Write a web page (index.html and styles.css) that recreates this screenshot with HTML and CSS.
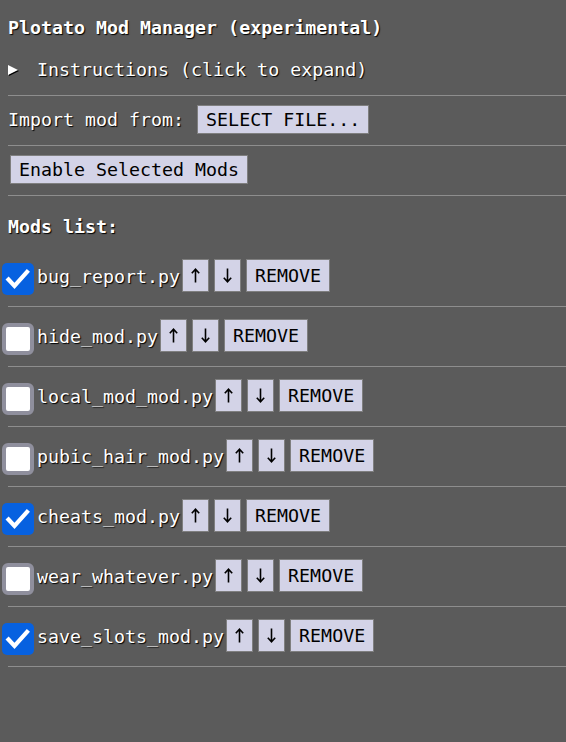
FILE: index.html
```html
<!DOCTYPE html>
<html lang="en">
<head>
<meta charset="utf-8">
<title>Plotato Mod Manager</title>
<link rel="stylesheet" href="styles.css">
</head>
<body>
<div class="section intro">
  <div class="title">Plotato Mod Manager (experimental)</div>
  <details class="instructions">
    <summary><span class="marker"></span>Instructions (click to expand)</summary>
  </details>
</div>
<div class="section bar">
  <span class="label">Import mod from:</span>
  <button class="btn">SELECT FILE...</button>
</div>
<div class="section bar">
  <button class="btn enable">Enable Selected Mods</button>
</div>
<div class="mods-head">Mods list:</div>
<div class="mods">
  <div class="row">
    <span class="check on"><svg viewBox="0 0 32 32" width="32" height="32"><path d="M6.5 16.5 L12.5 23 L25 9" fill="none" stroke="#fff" stroke-width="4.2" stroke-linecap="square" stroke-linejoin="miter"/></svg></span>
    <span class="name">bug_report.py</span>
    <button class="btn small arrow-btn" aria-label="up"><svg class="arrow" viewBox="0 0 11 15" width="11" height="15"><path d="M5.5 14.5 V1.2 M1.8 5.2 L5.5 1.2 L9.2 5.2" fill="none" stroke="#000" stroke-width="1.6"/></svg></button><button class="btn small arrow-btn" aria-label="down"><svg class="arrow" viewBox="0 0 11 15" width="11" height="15"><path d="M5.5 0.5 V13.8 M1.8 9.8 L5.5 13.8 L9.2 9.8" fill="none" stroke="#000" stroke-width="1.6"/></svg></button><button class="btn small">REMOVE</button>
  </div>
  <div class="row">
    <span class="check off"></span>
    <span class="name">hide_mod.py</span>
    <button class="btn small arrow-btn" aria-label="up"><svg class="arrow" viewBox="0 0 11 15" width="11" height="15"><path d="M5.5 14.5 V1.2 M1.8 5.2 L5.5 1.2 L9.2 5.2" fill="none" stroke="#000" stroke-width="1.6"/></svg></button><button class="btn small arrow-btn" aria-label="down"><svg class="arrow" viewBox="0 0 11 15" width="11" height="15"><path d="M5.5 0.5 V13.8 M1.8 9.8 L5.5 13.8 L9.2 9.8" fill="none" stroke="#000" stroke-width="1.6"/></svg></button><button class="btn small">REMOVE</button>
  </div>
  <div class="row">
    <span class="check off"></span>
    <span class="name">local_mod_mod.py</span>
    <button class="btn small arrow-btn" aria-label="up"><svg class="arrow" viewBox="0 0 11 15" width="11" height="15"><path d="M5.5 14.5 V1.2 M1.8 5.2 L5.5 1.2 L9.2 5.2" fill="none" stroke="#000" stroke-width="1.6"/></svg></button><button class="btn small arrow-btn" aria-label="down"><svg class="arrow" viewBox="0 0 11 15" width="11" height="15"><path d="M5.5 0.5 V13.8 M1.8 9.8 L5.5 13.8 L9.2 9.8" fill="none" stroke="#000" stroke-width="1.6"/></svg></button><button class="btn small">REMOVE</button>
  </div>
  <div class="row">
    <span class="check off"></span>
    <span class="name">pubic_hair_mod.py</span>
    <button class="btn small arrow-btn" aria-label="up"><svg class="arrow" viewBox="0 0 11 15" width="11" height="15"><path d="M5.5 14.5 V1.2 M1.8 5.2 L5.5 1.2 L9.2 5.2" fill="none" stroke="#000" stroke-width="1.6"/></svg></button><button class="btn small arrow-btn" aria-label="down"><svg class="arrow" viewBox="0 0 11 15" width="11" height="15"><path d="M5.5 0.5 V13.8 M1.8 9.8 L5.5 13.8 L9.2 9.8" fill="none" stroke="#000" stroke-width="1.6"/></svg></button><button class="btn small">REMOVE</button>
  </div>
  <div class="row">
    <span class="check on"><svg viewBox="0 0 32 32" width="32" height="32"><path d="M6.5 16.5 L12.5 23 L25 9" fill="none" stroke="#fff" stroke-width="4.2" stroke-linecap="square" stroke-linejoin="miter"/></svg></span>
    <span class="name">cheats_mod.py</span>
    <button class="btn small arrow-btn" aria-label="up"><svg class="arrow" viewBox="0 0 11 15" width="11" height="15"><path d="M5.5 14.5 V1.2 M1.8 5.2 L5.5 1.2 L9.2 5.2" fill="none" stroke="#000" stroke-width="1.6"/></svg></button><button class="btn small arrow-btn" aria-label="down"><svg class="arrow" viewBox="0 0 11 15" width="11" height="15"><path d="M5.5 0.5 V13.8 M1.8 9.8 L5.5 13.8 L9.2 9.8" fill="none" stroke="#000" stroke-width="1.6"/></svg></button><button class="btn small">REMOVE</button>
  </div>
  <div class="row">
    <span class="check off"></span>
    <span class="name">wear_whatever.py</span>
    <button class="btn small arrow-btn" aria-label="up"><svg class="arrow" viewBox="0 0 11 15" width="11" height="15"><path d="M5.5 14.5 V1.2 M1.8 5.2 L5.5 1.2 L9.2 5.2" fill="none" stroke="#000" stroke-width="1.6"/></svg></button><button class="btn small arrow-btn" aria-label="down"><svg class="arrow" viewBox="0 0 11 15" width="11" height="15"><path d="M5.5 0.5 V13.8 M1.8 9.8 L5.5 13.8 L9.2 9.8" fill="none" stroke="#000" stroke-width="1.6"/></svg></button><button class="btn small">REMOVE</button>
  </div>
  <div class="row">
    <span class="check on"><svg viewBox="0 0 32 32" width="32" height="32"><path d="M6.5 16.5 L12.5 23 L25 9" fill="none" stroke="#fff" stroke-width="4.2" stroke-linecap="square" stroke-linejoin="miter"/></svg></span>
    <span class="name">save_slots_mod.py</span>
    <button class="btn small arrow-btn" aria-label="up"><svg class="arrow" viewBox="0 0 11 15" width="11" height="15"><path d="M5.5 14.5 V1.2 M1.8 5.2 L5.5 1.2 L9.2 5.2" fill="none" stroke="#000" stroke-width="1.6"/></svg></button><button class="btn small arrow-btn" aria-label="down"><svg class="arrow" viewBox="0 0 11 15" width="11" height="15"><path d="M5.5 0.5 V13.8 M1.8 9.8 L5.5 13.8 L9.2 9.8" fill="none" stroke="#000" stroke-width="1.6"/></svg></button><button class="btn small">REMOVE</button>
  </div>
</div>
</body>
</html>
```
FILE: styles.css
```css
html {
  background: #5b5b5b;
}
body {
  margin: 8px 0 0 2px;
  background: #5b5b5b;
  color: #ffffff;
  font-family: "DejaVu Sans Mono", "Liberation Mono", monospace;
  font-size: 18.3px;
  line-height: 22px;
  text-shadow: 1px 1px 1px #000;
}
.section {
  margin-left: 6px;
  border-bottom: 1px solid #8e8e8e;
}
.intro {
  padding: 9px 0 14px;
}
.title {
  font-weight: bold;
  height: 22px;
}
.instructions {
  margin-top: 20px;
}
.instructions summary {
  list-style: none;
  display: flex;
  align-items: center;
  height: 22px;
  cursor: pointer;
}
.instructions summary::-webkit-details-marker {
  display: none;
}
.marker {
  width: 0;
  height: 0;
  border-left: 10px solid #fff;
  border-top: 5px solid transparent;
  border-bottom: 5px solid transparent;
  margin-right: 19px;
  filter: drop-shadow(1px 1px 0.5px #000);
}
.bar {
  display: flex;
  align-items: center;
  padding: 9px 0 11px;
}
.label {
  margin-right: 13px;
}
.btn {
  font-family: "DejaVu Sans Mono", "Liberation Mono", monospace;
  font-size: 18.3px;
  line-height: 22px;
  color: #000;
  text-shadow: none;
  background: #d3d3e7;
  border: 1px solid #7f7f7f;
  border-radius: 0;
  height: 29px;
  padding: 0 8px;
  margin: 0;
}
.enable {
  margin-left: 2px;
}
.mods-head {
  margin-left: 6px;
  font-weight: bold;
  padding: 20px 0 9px;
  height: 22px;
}
.row {
  display: flex;
  align-items: center;
  height: 60px;
  background: linear-gradient(#8e8e8e, #8e8e8e) no-repeat 6px 100% / calc(100% - 6px) 1px;
}
.check {
  box-sizing: border-box;
  width: 32px;
  height: 32px;
  margin: 4px 3px 1px 0;
  flex: none;
  display: block;
}
.check svg {
  display: block;
}
.check.on {
  background: #0761e0;
  border-radius: 5px;
}
.check.off {
  background: #ffffff;
  border: 4px solid #8f8f9d;
  border-radius: 6px;
}
.name {
  margin-right: 2px;
}
.btn.small {
  height: 33px;
  padding: 0 8px;
  margin: 0 5px 3px 0;
  display: flex;
  align-items: center;
  justify-content: center;
}
.btn.small.arrow-btn {
  padding: 0 7px;
}
.arrow {
  display: block;
}
```
